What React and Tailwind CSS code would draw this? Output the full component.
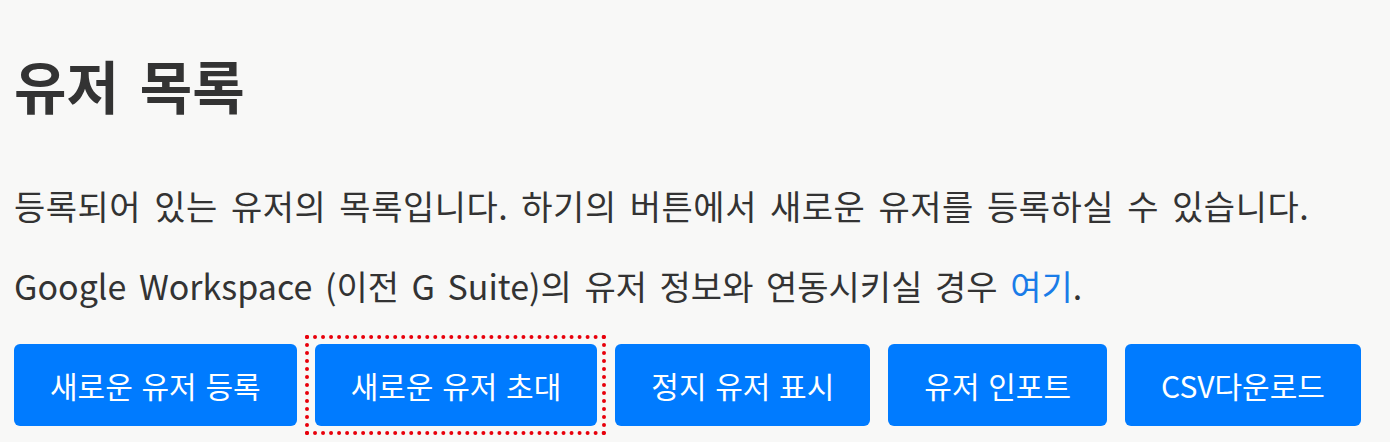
import React from 'react';

const FONT = "font-['Noto_Sans_CJK_KR','Noto_Sans',sans-serif]";

const buttons = [
  { label: '새로운 유저 등록' },
  { label: '새로운 유저 초대', marked: true },
  { label: '정지 유저 표시' },
  { label: '유저 인포트' },
  { label: 'CSV다운로드' },
];

export default function App() {
  return (
    <div className={`${FONT} min-h-[442px] w-full bg-[#f8f8f7] text-[#333] px-[14px] pt-[50px] [word-spacing:5px]`}>
      {/* page title */}
      <h1 className="text-[57px] font-bold leading-[68px] [word-spacing:8px]">유저 목록</h1>

      <p className="mt-[64px] text-[34px] leading-[48px] tracking-[0.5px]">
        등록되어 있는 유저의 목록입니다. 하기의 버튼에서 새로운 유저를 등록하실 수 있습니다.
      </p>
      <p className="mt-[32px] text-[34px] leading-[48px]">
        Google Workspace (이전 G Suite)의 유저 정보와 연동시키실 경우{' '}
        <a href="#" className="text-[#1a7ce8]">여기</a>.
      </p>

      <div className="mt-[34px] flex gap-[18px]">
        {buttons.map((b) => (
          <div key={b.label} className="relative">
            <button className="h-[82px] px-[36px] rounded-[6px] bg-[#007bff] text-white text-[30px] leading-none whitespace-nowrap [word-spacing:2px]">
              {b.label}
            </button>
            {b.marked && (
              <span className="pointer-events-none absolute -left-[10px] -top-[9px] -right-[9px] -bottom-[9px] border-[4px] border-dotted border-[#e8000b]" />
            )}
          </div>
        ))}
      </div>
    </div>
  );
}
